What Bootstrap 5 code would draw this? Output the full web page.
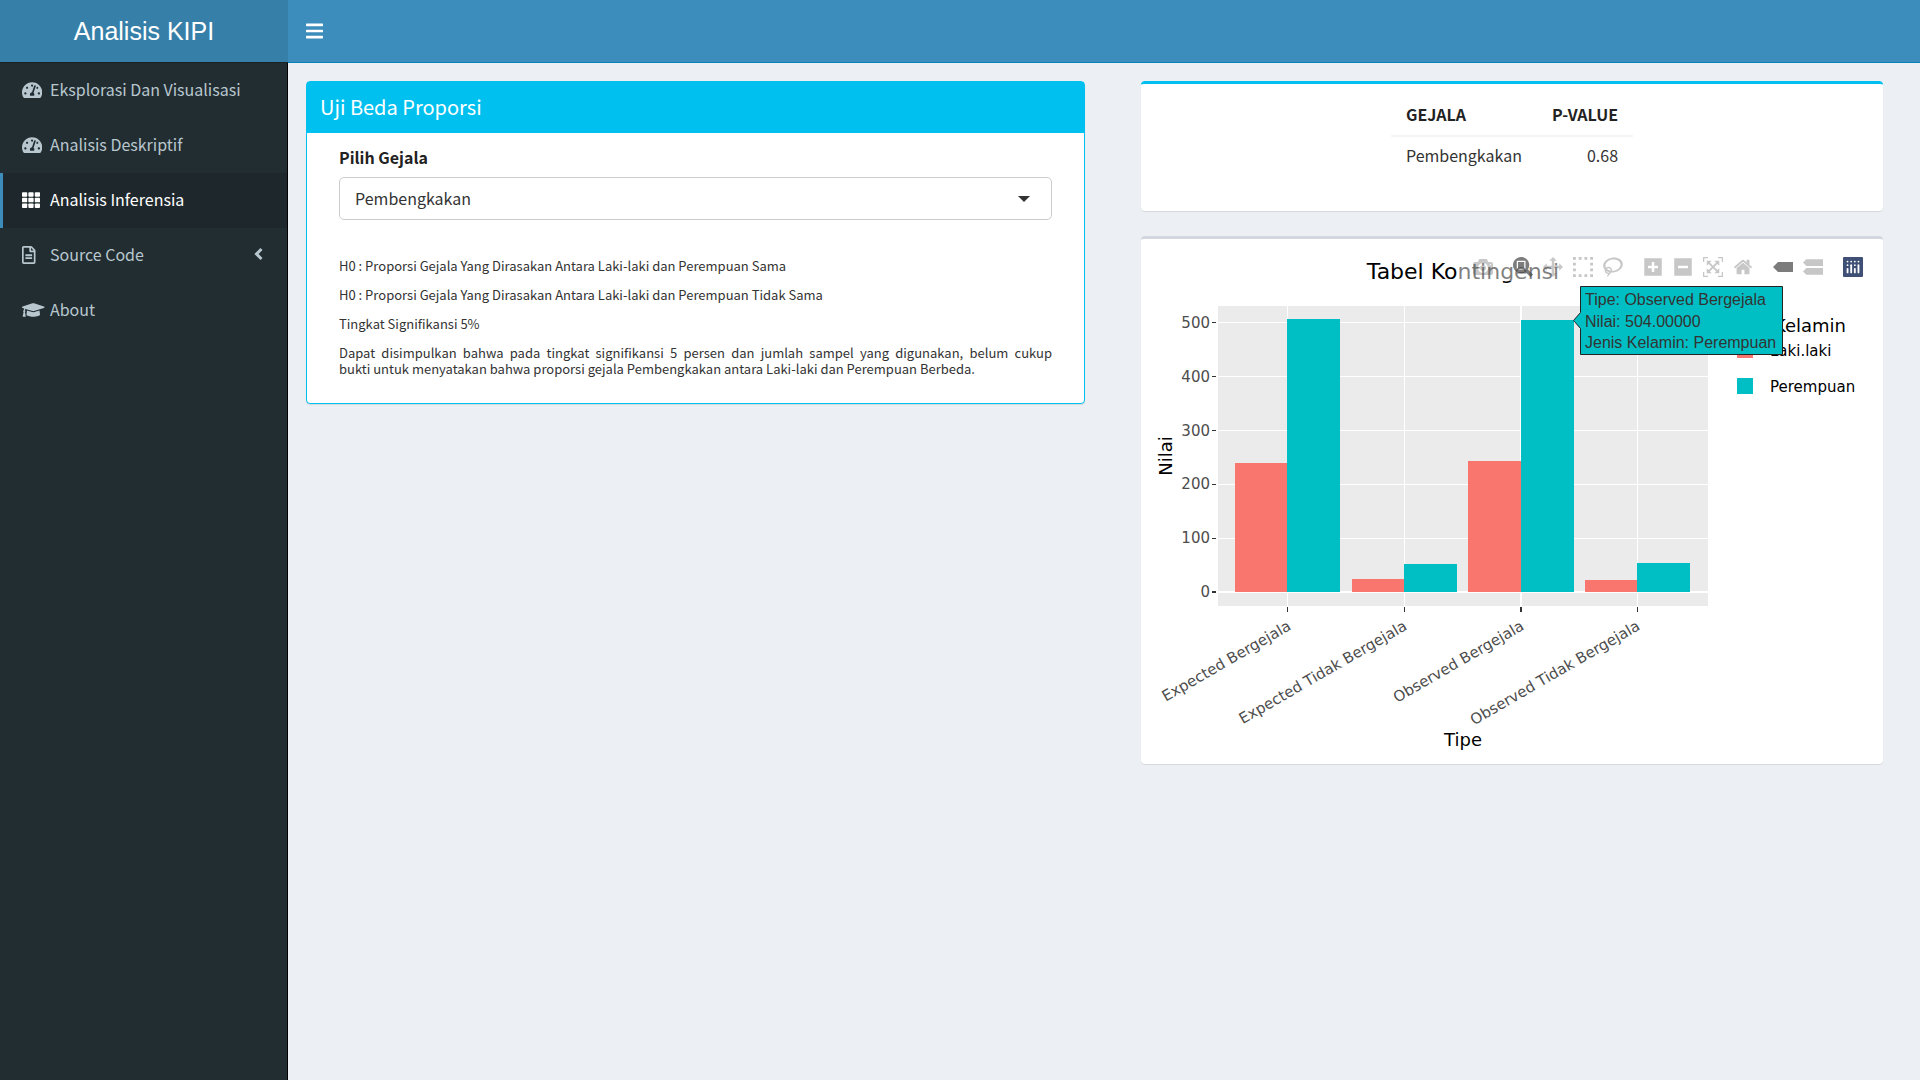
<!DOCTYPE html>
<html lang="id">
<head>
<meta charset="utf-8">
<meta name="viewport" content="width=device-width, initial-scale=1">
<title>Analisis KIPI</title>
<link rel="stylesheet" href="https://cdn.jsdelivr.net/npm/bootstrap@5.3.0/dist/css/bootstrap.min.css">
<style>
  body { font-family: "Noto Sans CJK SC", "Noto Sans", sans-serif; font-size: 16px; line-height: 25px; color: #333; background: #ecf0f5; }
  .topbar { background: #3c8dbc; height: 63px; border-bottom: 1px solid #0a80b8; }
  .side-col { width: 288px; flex: none; }
  .brand-box { background: #367fa9; height: 63px; border-bottom: 1px solid #1a2226; font-family: "Liberation Sans", Arial, sans-serif; font-size: 25px; line-height: 62px; color: #fff; text-decoration: none; }
  .side-menu { background: #222d32; border-right: 1px solid #000; }
  .side-menu .nav-link { color: #b8c7ce; padding: 14px 24px 16px 19px; border-left: 3px solid transparent; }
  .side-menu .nav-link.active { color: #fff; background: #1e282c; border-left-color: #3c8dbc; }
  .side-menu svg { height: 18px; fill: currentColor; }
  .menu-icon { width: 28px; flex: none; display: flex; }
  .menu-btn { color: #fff; padding: 0 18px; line-height: 1; }
  .page-area { padding: 18px 0; }
  .col-left { padding: 0 19px 0 18px; }
  .col-right { padding: 0 37px; }
  .panel { background: #fff; border-radius: 4px; box-shadow: 0 1px 1px rgba(0,0,0,.1); }
  .panel-info { border: 1px solid #00c0ef; }
  .panel-info > header { background: #00c0ef; color: #fff; padding: 12px 13px 14px; }
  .panel-info h1 { font-size: 20px; line-height: 25px; font-weight: 400; margin: 0; }
  .panel-body { padding: 12px 32px 26px; }
  .panel-body label { font-weight: 700; color: #222; margin-bottom: 7px; }
  .gejala-select { height: 43px; border: 1px solid #ccc; border-radius: 5px; padding: 0 15px 2px; font-size: 16px; color: #333;
    background-image: url("data:image/svg+xml,%3Csvg xmlns='http://www.w3.org/2000/svg' viewBox='0 0 12 6'%3E%3Cpath d='M0 0h12L6 6z' fill='%23333'/%3E%3C/svg%3E");
    background-size: 12px 6px; background-position: right 21px center; }
  .notes { margin-top: 38px; font-size: 13px; line-height: 16px; text-align: justify; }
  .notes p { margin-bottom: 13px; }
  .notes p:last-child { margin-bottom: 0; }
  .panel-table { border-top: 3px solid #00c0ef; padding: 12px 12px 35px; margin-bottom: 25px; }
  .result-table { border-collapse: collapse; margin: 0 auto; }
  .result-table th, .result-table td { padding: 6px 15px 8px; }
  .result-table th { border-bottom: 2px solid #f4f4f4; color: #222; }
  .panel-chart { border-top: 3px solid #d2d6de; position: relative; }
  .panel-chart > svg { display: block; width: 100%; height: auto; font-family: "DejaVu Sans", Verdana, sans-serif; }
  .modebar { position: absolute; top: 14px; right: 15px; }
  .modebar > div { background: rgba(255,255,255,.5); padding-left: 10px; display: flex; }
  .modebar button { border: 0; background: none; padding: 4px 5px; height: 28px; line-height: 0; }
  .modebar svg { width: 20px; height: 20px; fill: rgba(68,68,68,.3); }
  .modebar .on svg { fill: rgba(68,68,68,.7); }
</style>
<script src="https://cdn.jsdelivr.net/npm/bootstrap@5.3.0/dist/js/bootstrap.bundle.min.js"></script>
</head>
<body>
<div class="d-flex min-vh-100">
  <aside class="side-col d-flex flex-column">
    <a href="#" class="brand-box d-block text-center">Analisis KIPI</a>
    <nav class="side-menu flex-grow-1">
      <ul class="nav flex-column">
        <li><a class="nav-link d-flex align-items-center" href="#"><span class="menu-icon"><svg viewBox="0 0 576 512"><path id="gauge" d="M288 32C128.94 32 0 160.94 0 320c0 52.8 14.25 102.26 39.06 144.8 5.61 9.62 16.3 15.2 27.44 15.2h443c11.14 0 21.83-5.58 27.44-15.2C561.75 422.26 576 372.8 576 320c0-159.06-128.94-288-288-288zm0 64c14.71 0 26.58 10.13 30.32 23.65-1.11 2.26-2.64 4.23-3.45 6.67l-9.22 27.67c-5.13 3.49-10.97 6.01-17.64 6.01-17.67 0-32-14.33-32-32S270.33 96 288 96zM96 384c-17.67 0-32-14.33-32-32s14.33-32 32-32 32 14.33 32 32-14.33 32-32 32zm48-160c-17.67 0-32-14.33-32-32s14.33-32 32-32 32 14.33 32 32-14.33 32-32 32zm246.77-72.41l-61.33 184C343.13 347.33 352 364.54 352 384c0 11.72-3.38 22.55-8.88 32H232.88c-5.5-9.45-8.88-20.28-8.88-32 0-33.94 26.5-61.43 59.9-63.59l61.34-184.01c4.17-12.56 17.73-19.45 30.36-15.17 12.57 4.19 19.35 17.79 15.17 30.36zm14.66 57.2l15.52-46.55c3.47-1.29 7.13-2.23 11.05-2.23 17.67 0 32 14.33 32 32s-14.33 32-32 32c-11.38-.01-20.89-6.28-26.57-15.22zM480 384c-17.67 0-32-14.33-32-32s14.33-32 32-32 32 14.33 32 32-14.33 32-32 32z"/></svg></span>Eksplorasi Dan Visualisasi</a></li>
        <li><a class="nav-link d-flex align-items-center" href="#"><span class="menu-icon"><svg viewBox="0 0 576 512"><use href="#gauge"/></svg></span>Analisis Deskriptif</a></li>
        <li><a class="nav-link active d-flex align-items-center" href="#" aria-current="page"><span class="menu-icon"><svg viewBox="0 0 512 512"><rect y="32" width="149" height="128" rx="24"/><rect x="181" y="32" width="149" height="128" rx="24"/><rect x="363" y="32" width="149" height="128" rx="24"/><rect y="192" width="149" height="128" rx="24"/><rect x="181" y="192" width="149" height="128" rx="24"/><rect x="363" y="192" width="149" height="128" rx="24"/><rect y="352" width="149" height="128" rx="24"/><rect x="181" y="352" width="149" height="128" rx="24"/><rect x="363" y="352" width="149" height="128" rx="24"/></svg></span>Analisis Inferensia</a></li>
        <li><a class="nav-link d-flex align-items-center" href="#"><span class="menu-icon"><svg viewBox="0 0 384 512"><path d="M288 248v28c0 6.600-5.400 12-12 12H108c-6.600 0-12-5.400-12-12v-28c0-6.600 5.400-12 12-12h168c6.600 0 12 5.400 12 12zm-12 72H108c-6.600 0-12 5.400-12 12v28c0 6.600 5.400 12 12 12h168c6.600 0 12-5.400 12-12v-28c0-6.600-5.400-12-12-12zm108-188.100V464c0 26.500-21.500 48-48 48H48c-26.500 0-48-21.500-48-48V48C0 21.500 21.500 0 48 0h204.100C264.800 0 277 5.100 286 14.100L369.900 98c9 8.900 14.100 21.200 14.100 33.900zm-128-80V128h76.100L256 51.900zM336 464V176H232c-13.300 0-24-10.700-24-24V48H48v416h288z"/></svg></span>Source Code<svg class="ms-auto" viewBox="0 0 9 18"><path d="M7.500 3 2.500 8l5 5" fill="none" stroke="currentColor" stroke-width="3"/></svg></a></li>
        <li><a class="nav-link d-flex align-items-center" href="#"><span class="menu-icon"><svg viewBox="0 0 640 512"><path d="M622.340 153.200L343.400 67.500c-15.200-4.670-31.600-4.670-46.790 0L17.660 153.200c-23.540 7.230-23.540 38.360 0 45.590l48.630 14.940c-10.670 13.190-17.230 29.280-17.880 46.900C38.780 266.150 32 276.110 32 288c0 10.780 5.680 19.850 13.860 25.650L20.330 428.530C18.110 438.520 25.710 448 35.940 448h56.110c10.240 0 17.840-9.480 15.620-19.470L82.140 313.650C90.320 307.850 96 298.780 96 288c0-11.570-6.470-21.250-15.660-26.870.76-15.020 8.440-28.300 20.690-36.720L296.600 284.500c9.060 2.780 26.440 6.250 46.790 0l278.950-85.700c23.550-7.240 23.550-38.360 0-45.600zM352.790 315.090c-28.530 8.760-52.840 3.920-65.590 0l-145.020-44.550L128 384c0 35.350 85.960 64 192 64s192-28.650 192-64l-14.180-113.470-145.030 44.560z"/></svg></span>About</a></li>
      </ul>
    </nav>
  </aside>
  <div class="flex-grow-1">
    <header class="topbar d-flex align-items-center">
      <button type="button" class="btn menu-btn border-0" aria-label="Menu"><svg width="17" height="20" viewBox="0 0 448 512" fill="#fff"><rect y="60" width="448" height="72" rx="16"/><rect y="220" width="448" height="72" rx="16"/><rect y="380" width="448" height="72" rx="16"/></svg></button>
    </header>
    <main class="page-area">
      <div class="row g-0 align-items-start">
        <div class="col-6 col-left">
          <section class="panel panel-info">
            <header><h1>Uji Beda Proporsi</h1></header>
            <div class="panel-body">
              <label for="gejala" class="d-block">Pilih Gejala</label>
              <select id="gejala" class="form-select gejala-select"><option>Pembengkakan</option></select>
              <div class="notes">
                <p>H0 : Proporsi Gejala Yang Dirasakan Antara Laki-laki dan Perempuan Sama</p>
                <p>H0 : Proporsi Gejala Yang Dirasakan Antara Laki-laki dan Perempuan Tidak Sama</p>
                <p>Tingkat Signifikansi 5%</p>
                <p>Dapat disimpulkan bahwa pada tingkat signifikansi 5 persen dan jumlah sampel yang digunakan, belum cukup <span class="text-nowrap">bukti untuk</span> menyatakan bahwa proporsi gejala Pembengkakan antara Laki-laki dan Perempuan Berbeda.</p>
              </div>
            </div>
          </section>
        </div>
        <div class="col-6 col-right">
          <section class="panel panel-table">
            <table class="result-table">
              <thead><tr><th>GEJALA</th><th class="text-end">P-VALUE</th></tr></thead>
              <tbody><tr><td>Pembengkakan</td><td class="text-end">0.68</td></tr></tbody>
            </table>
          </section>
          <section class="panel panel-chart">
            <svg viewBox="0 0 742 525" role="img" aria-label="Tabel Kontingensi">
              <rect x="77" y="67" width="490" height="300" fill="#ebebeb"/>
              <g fill="#fff">
                <rect x="77" y="83" width="490" height="1"/><rect x="77" y="137" width="490" height="1"/><rect x="77" y="191" width="490" height="1"/><rect x="77" y="245" width="490" height="1"/><rect x="77" y="299" width="490" height="1"/><rect x="77" y="352" width="490" height="2"/>
                <rect x="146" y="67" width="1" height="300"/><rect x="263" y="67" width="1" height="300"/><rect x="379" y="67" width="2" height="300"/><rect x="496" y="67" width="1" height="300"/>
              </g>
              <g fill="#f8766d">
                <rect x="94" y="224" width="52" height="129"/><rect x="211" y="340" width="52" height="13"/><rect x="327" y="222" width="53" height="131"/><rect x="444" y="341" width="52" height="12"/>
              </g>
              <g fill="#00bfc4">
                <rect x="146" y="80" width="53" height="273"/><rect x="263" y="325" width="53" height="28"/><rect x="380" y="81" width="53" height="272"/><rect x="496" y="324" width="53" height="29"/>
              </g>
              <g fill="#333">
                <rect x="71" y="83" width="4" height="1"/><rect x="71" y="137" width="4" height="1"/><rect x="71" y="191" width="4" height="1"/><rect x="71" y="245" width="4" height="1"/><rect x="71" y="299" width="4" height="1"/><rect x="71" y="352" width="4" height="2"/>
                <rect x="146" y="368" width="1" height="5"/><rect x="263" y="368" width="1" height="5"/><rect x="379" y="368" width="2" height="5"/><rect x="496" y="368" width="1" height="5"/>
              </g>
              <g font-size="15" fill="#4d4d4d" text-anchor="end">
                <text x="69" y="89">500</text><text x="69" y="143">400</text><text x="69" y="197">300</text><text x="69" y="250">200</text><text x="69" y="304">100</text><text x="69" y="358">0</text>
              </g>
              <g font-size="15" fill="#4d4d4d" text-anchor="end">
                <text transform="translate(151 390) rotate(-30)">Expected Bergejala</text>
                <text transform="translate(267 390) rotate(-30)">Expected Tidak Bergejala</text>
                <text transform="translate(384 390) rotate(-30)">Observed Bergejala</text>
                <text transform="translate(500 390) rotate(-30)">Observed Tidak Bergejala</text>
              </g>
              <g fill="#000" text-anchor="middle">
                <text x="322" y="40" font-size="22">Tabel Kontingensi</text>
                <text x="322" y="507" font-size="18">Tipe</text>
                <text transform="translate(31 217) rotate(-90)" font-size="18">Nilai</text>
              </g>
              <text x="705" y="93" font-size="18" text-anchor="end">Jenis Kelamin</text>
              <rect x="596" y="103" width="16" height="16" fill="#f8766d"/><rect x="596" y="139" width="16" height="16" fill="#00bfc4"/>
              <g font-size="15"><text x="629" y="117">Laki.laki</text><text x="629" y="153">Perempuan</text></g>
              <g font-family="Liberation Sans, Arial, sans-serif" font-size="16" fill="#333">
                <path d="M432.500 81.500l7-8v-26h202v68h-202v-26z" fill="#00bfc4" stroke="#222"/>
                <text x="444" y="66">Tipe: Observed Bergejala</text><text x="444" y="88">Nilai: 504.00000</text><text x="444" y="109">Jenis Kelamin: Perempuan</text>
              </g>
            </svg>
            <div class="modebar d-flex">
              <div><button type="button" aria-label="Download plot as a png"><svg viewBox="0 0 1000 1000"><path transform="matrix(1 0 0 -1 0 850)" d="m500 450c-83 0-150-67-150-150 0-83 67-150 150-150 83 0 150 67 150 150 0 83-67 150-150 150z m400 150h-120c-16 0-34 13-39 29l-31 93c-6 15-23 28-40 28h-340c-16 0-34-13-39-28l-31-94c-6-15-23-28-40-28h-120c-55 0-100-45-100-100v-450c0-55 45-100 100-100h800c55 0 100 45 100 100v450c0 55-45 100-100 100z m-400-550c-138 0-250 112-250 250 0 138 112 250 250 250 138 0 250-112 250-250 0-138-112-250-250-250z m365 380c-19 0-35 16-35 35 0 19 16 35 35 35 19 0 35-16 35-35 0-19-16-35-35-35z"/></svg></button></div>
              <div><button type="button" class="on" aria-label="Zoom"><svg viewBox="0 0 1000 1000"><path transform="matrix(1 0 0 -1 0 850)" d="m1000-25l-250 251c40 63 63 138 63 218 0 224-182 406-407 406-224 0-406-182-406-406s183-406 407-406c80 0 155 22 218 62l250-250 125 125z m-812 250l0 438 437 0 0-438-437 0z m62 375l313 0 0-312-313 0 0 312z"/></svg></button><button type="button" aria-label="Pan"><svg viewBox="0 0 1000 1000"><path transform="matrix(1 0 0 -1 0 850)" d="m1000 350l-187 188 0-125-250 0 0 250 125 0-188 187-187-187 125 0 0-250-250 0 0 125-188-188 186-187 0 125 252 0 0-250-125 0 187-188 188 188-125 0 0 250 250 0 0-126 187 188z"/></svg></button><button type="button" aria-label="Box Select"><svg viewBox="0 0 1000 1000"><path transform="matrix(1 0 0 -1 0 850)" d="m0 850l0-143 143 0 0 143-143 0z m286 0l0-143 143 0 0 143-143 0z m285 0l0-143 143 0 0 143-143 0z m286 0l0-143 143 0 0 143-143 0z m-857-286l0-143 143 0 0 143-143 0z m857 0l0-143 143 0 0 143-143 0z m-857-285l0-143 143 0 0 143-143 0z m857 0l0-143 143 0 0 143-143 0z m-857-286l0-143 143 0 0 143-143 0z m286 0l0-143 143 0 0 143-143 0z m285 0l0-143 143 0 0 143-143 0z m286 0l0-143 143 0 0 143-143 0z"/></svg></button><button type="button" aria-label="Lasso Select"><svg viewBox="0 0 1031 1000"><path transform="matrix(1 0 0 -1 0 850)" d="m1018 538c-36 207-290 336-568 286-277-48-473-256-436-463 10-57 36-108 76-151-13-66 11-137 68-183 34-28 75-41 114-42l-55-70 0 0c-2-1-3-2-4-3-10-14-8-34 5-45 14-11 34-8 45 4 1 1 2 3 2 5l0 0 113 140c16 11 31 24 45 40 4 3 6 7 8 11 48-3 100 0 151 9 278 48 473 255 436 462z m-624-379c-80 14-149 48-197 96 42 42 109 47 156 9 33-26 47-66 41-105z m-187-74c-19 16-33 37-39 60 50-32 109-55 174-68-42-25-95-24-135 8z m360 75c-34-7-69-9-102-8 8 62-16 128-68 170-73 59-175 54-244-5-9 20-16 40-20 61-28 159 121 317 333 354s407-60 434-217c28-159-121-318-333-355z"/></svg></button></div>
              <div><button type="button" aria-label="Zoom in"><svg viewBox="0 0 875 1000"><path transform="matrix(1 0 0 -1 0 850)" d="m1 787l0-875 875 0 0 875-875 0z m687-500l-187 0 0-187-125 0 0 187-188 0 0 125 188 0 0 187 125 0 0-187 187 0 0-125z"/></svg></button><button type="button" aria-label="Zoom out"><svg viewBox="0 0 875 1000"><path transform="matrix(1 0 0 -1 0 850)" d="m0 788l0-876 876 0 0 876-876 0z m688-500l-500 0 0 125 500 0 0-125z"/></svg></button><button type="button" aria-label="Autoscale"><svg viewBox="0 0 1000 1000"><path transform="matrix(1 0 0 -1 0 850)" d="m250 850l-187 0-63 0 0-62 0-188 63 0 0 188 187 0 0 62z m688 0l-188 0 0-62 188 0 0-188 62 0 0 188 0 62-62 0z m-875-938l0 188-63 0 0-188 0-62 63 0 187 0 0 62-187 0z m875 188l0-188-188 0 0-62 188 0 62 0 0 62 0 188-62 0z m-125 188l-1 0-93-94-156 156 156 156 92-93 2 0 0 250-250 0 0-2 93-92-156-156-156 156 94 92 0 2-250 0 0-250 0 0 93 93 157-156-157-156-93 94 0 0 0-250 250 0 0 0-94 93 156 157 156-157-93-93 0 0 250 0 0 250z"/></svg></button><button type="button" aria-label="Reset axes"><svg viewBox="0 0 928 1000"><path transform="matrix(1 0 0 -1 0 850)" d="m786 296v-267q0-15-11-26t-25-10h-214v214h-143v-214h-214q-15 0-25 10t-11 26v267q0 1 0 2t0 2l321 264 321-264q1-1 1-4z m124 39l-34-41q-5-5-12-6h-2q-7 0-12 3l-386 322-386-322q-7-4-13-4-7 2-12 7l-35 41q-4 5-3 13t6 12l401 334q18 15 42 15t43-15l136-114v109q0 8 5 13t13 5h107q8 0 13-5t5-13v-227l122-102q5-5 6-12t-4-13z"/></svg></button></div>
              <div><button type="button" class="on" aria-label="Show closest data on hover"><svg viewBox="0 0 1500 1000"><path transform="matrix(1 0 0 -1 0 850)" d="m375 725l0 0-375-375 375-374 0-1 1125 0 0 750-1125 0z"/></svg></button><button type="button" aria-label="Compare data on hover"><svg viewBox="0 0 1125 1000"><path transform="matrix(1 0 0 -1 0 850)" d="m187 786l0 2-187-188 188-187 0 0 937 0 0 373-938 0z m0-499l0 1-187-188 188-188 0 0 937 0 0 376-938-1z"/></svg></button></div>
              <div><button type="button" aria-label="Produced with Plotly"><svg viewBox="0 0 132 132"><rect width="132" height="132" rx="6" fill="#3f4f75"/><g fill="#fff"><circle cx="30" cy="30" r="6"/><circle cx="54" cy="30" r="6"/><circle cx="78" cy="30" r="6"/><circle cx="102" cy="30" r="6"/><circle cx="30" cy="54" r="6"/><circle cx="78" cy="54" r="6"/><rect x="24" y="72" width="12" height="36" rx="6"/><rect x="72" y="72" width="12" height="36" rx="6"/><rect x="48" y="48" width="12" height="60" rx="6"/><rect x="96" y="48" width="12" height="60" rx="6"/></g></svg></button></div>
            </div>
          </section>
        </div>
      </div>
    </main>
  </div>
</div>
</body>
</html>
